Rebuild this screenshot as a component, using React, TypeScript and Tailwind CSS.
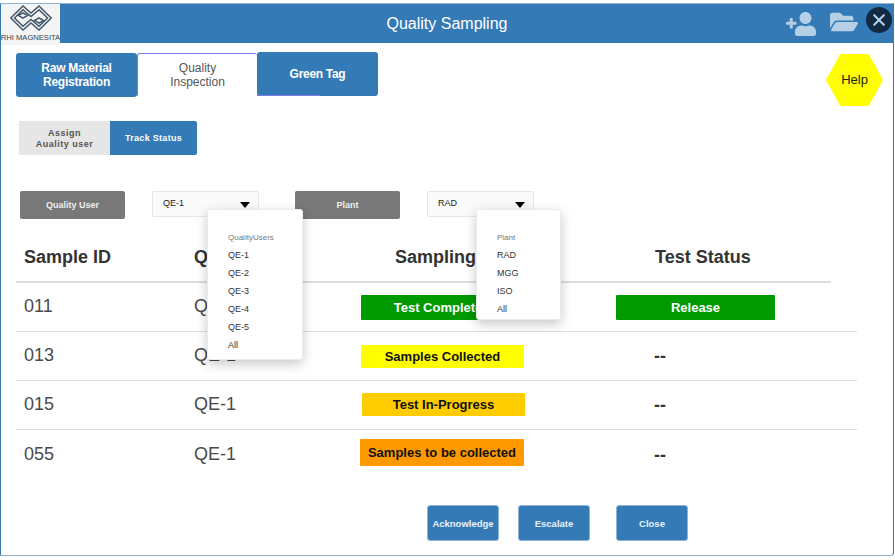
import { FaFolderOpen, FaUserPlus } from "react-icons/fa";
import { IoClose } from "react-icons/io5";

const qualityUsers = ["QE-1", "QE-2", "QE-3", "QE-4", "QE-5", "All"];
const plants = ["RAD", "MGG", "ISO", "All"];

type Row = {
  id: string;
  user: string;
  status: string;
  badge: string;
  release: boolean;
};

const rows: Row[] = [
  { id: "011", user: "QE-1", status: "Test Completed", badge: "h-[25px] mt-[12px] w-[162px] bg-[#009900] text-white", release: true },
  { id: "013", user: "QE-1", status: "Samples Collected", badge: "h-[23px] mt-[13px] w-[163px] bg-[#ffff00] text-[#111]", release: false },
  { id: "015", user: "QE-1", status: "Test In-Progress", badge: "h-[23px] mt-[12px] ml-px w-[163px] bg-[#ffcc00] text-[#111]", release: false },
  { id: "055", user: "QE-1", status: "Samples to be collected", badge: "h-[27px] mt-[9px] -ml-px w-[164px] bg-[#ff9900] text-[#111]", release: false },
];

function Logo() {
  return (
    <div className="flex h-[41px] w-[59px] shrink-0 flex-col items-center bg-[#f4f4f4]">
      <svg width="42" height="26" viewBox="0 0 42 26" className="mt-px" fill="none" stroke="#43566a" strokeWidth="1.5">
        <path d="M0.8 13 L13 1 L21 8 L29 1 L41.2 13 L29 25 L21 18 L13 25 Z" />
        <path d="M4.5 13 L13 4.8 L21 11.5 L29 4.8 L37.5 13 L29 21.2 L21 14.5 L13 21.2 Z" />
        <path d="M8.5 10.5 L13 7.8 L17.5 10.5 L13 13.2 Z M24.5 15.5 L29 12.8 L33.5 15.5 L29 18.2 Z" />
      </svg>
      <span className="mt-[2px] whitespace-nowrap text-[7.6px] leading-[10px] font-medium text-[#33424f]">RHI MAGNESITA</span>
    </div>
  );
}

function FilterSelect({ value, options, title, menuClass }: { value: string; options: string[]; title: string; menuClass: string }) {
  return (
    <div className="relative h-[26px] w-[107px]">
      <div className="flex h-full items-center justify-between rounded-[2px] border border-[#e6e6e6] bg-[#fafafa] pr-[8px] pl-[10px] text-[9px] text-[#222]">
        <span>{value}</span>
        <span className="mt-px h-0 w-0 border-x-[5px] border-t-[6px] border-x-transparent border-t-black" />
      </div>
      <div className={`absolute z-10 flex flex-col rounded-[3px] border border-[#ececec] bg-white pt-[19px] pl-[20px] text-[9px] text-[#333] shadow-[0_4px_12px_rgba(0,0,0,0.22)] ${menuClass}`}>
        <div className="h-[17px] text-[8px] leading-[18px] text-[#777]">{title}</div>
        {options.map((opt) => (
          <div key={opt} className="h-[18px] leading-[18px]">
            {opt}
          </div>
        ))}
      </div>
    </div>
  );
}

export default function App() {
  return (
    <div className="h-[560px] w-[895px] overflow-hidden bg-white pt-[3px] font-['Liberation_Sans',Arial,sans-serif]">
      <div className="h-[553px] w-[894px] rounded-br-[4px] border border-t-[#8fb4d6] border-r-[#337ab7] border-b-[#8fb4d6] border-l-[#337ab7]">
        {/* header */}
        <div className="relative flex h-[39px] items-start bg-[#337ab7]">
          <Logo />
          <div className="flex-1 pt-[10px] pl-[48px] text-center text-[16px] leading-[20px] text-white">Quality Sampling</div>
          <div className="flex items-start pt-[3px] pr-[1px]">
            <FaUserPlus className="mt-[2px] mr-[14px] -scale-x-100 text-[#b5cfe6]" size={30} />
            <FaFolderOpen className="mt-[1px] mr-[8px] text-[#b5cfe6]" size={28} />
            <div className="flex h-[26px] w-[26px] items-center justify-center rounded-full bg-[#132a43]">
              <IoClose className="text-[#b5cfe6]" size={22} />
            </div>
          </div>
        </div>

        {/* tabs + help */}
        <div className="flex items-start justify-between pt-[9px] pr-[10px] pl-[15px]">
          <div className="flex items-start text-[12px] leading-[14px]">
            <button type="button" className="mt-px h-[44px] w-[121px] rounded-[3px] bg-[#337ab7] font-bold tracking-[-0.25px] text-white">
              Raw Material
              <br />
              Registration
            </button>
            <button type="button" className="mt-px h-[43px] w-[120px] rounded-t-[3px] border-t border-l border-t-[#7b7bef] border-l-[#7b7bef] bg-white text-[#555]">
              Quality
              <br />
              Inspection
            </button>
            <div className="relative">
              <button type="button" className="h-[44px] w-[121px] rounded-[3px] bg-[#337ab7] font-bold tracking-[-0.3px] text-white">
                Green Tag
              </button>
              <div className="absolute bottom-0 left-0 h-px w-[63px] bg-[#7b7bef]" />
            </div>
          </div>
          <div className="mt-[2px] flex h-[52px] w-[57px] items-center justify-center bg-[#ffff00] text-[13px] text-[#222] [clip-path:polygon(25%_0,75%_0,100%_50%,75%_100%,25%_100%,0_50%)]">
            Help
          </div>
        </div>

        {/* sub tabs */}
        <div className="mt-[15px] ml-[18px] flex h-[34px] w-[178px] text-[9px] leading-[11px] font-bold tracking-[0.3px]">
          <div className="flex w-[91px] items-center justify-center bg-[#e6e6e6] pt-[2px] text-center tracking-[0.5px] text-[#555]">
            Assign
            <br />
            Auality user
          </div>
          <div className="flex w-[87px] items-center justify-center rounded-r-[2px] bg-[#337ab7] text-white">Track Status</div>
        </div>

        {/* filters */}
        <div className="mt-[36px] ml-[19px] flex items-start">
          <div className="flex h-[28px] w-[105px] items-center justify-center rounded-[2px] bg-[#787878] pt-[2px] text-[9px] font-bold text-[#eee]">Quality User</div>
          <div className="ml-[27px]">
            <FilterSelect value="QE-1" options={qualityUsers} title="QualityUsers" menuClass="top-[18px] left-[55px] h-[151px] w-[96px]" />
          </div>
          <div className="ml-[36px] flex h-[28px] w-[105px] items-center justify-center rounded-[2px] bg-[#787878] pt-[2px] text-[9px] font-bold text-[#eee]">Plant</div>
          <div className="ml-[27px]">
            <FilterSelect value="RAD" options={plants} title="Plant" menuClass="top-[18px] left-[49px] h-[111px] w-[85px]" />
          </div>
        </div>

        {/* table */}
        <div className="mt-[19px] ml-[15px] w-[841px]">
          <div className="grid h-[45px] w-[815px] grid-cols-[178px_167px_255px_1fr] items-center border-b-2 border-[#dddddd] pb-[4px] text-[18px] font-bold text-[#333]">
            <div className="pl-[8px]">Sample ID</div>
            <div>Quality User</div>
            <div className="pl-[34px] whitespace-nowrap">Sampling Status</div>
            <div className="pl-[39px]">Test Status</div>
          </div>
          {rows.map((row, i) => (
            <div
              key={row.id}
              className={`grid h-[49px] grid-cols-[178px_167px_255px_1fr] text-[18px] text-[#4a4a4a] ${i < rows.length - 1 ? "border-b border-[#dddddd]" : "pt-px"}`}
            >
              <div className="pt-[12px] pl-[8px] leading-[22px]">{row.id}</div>
              <div className="pt-[12px] leading-[22px]">{row.user}</div>
              <div className={i === rows.length - 1 ? "-mt-px" : ""}>
                <div className={`flex items-center justify-center rounded-[1px] text-[13px] font-bold ${row.badge}`}>{row.status}</div>
              </div>
              <div>
                {row.release ? (
                  <div className="mt-[12px] flex h-[25px] w-[159px] items-center justify-center rounded-[1px] bg-[#009900] text-[13px] font-bold text-white">Release</div>
                ) : (
                  <div className="pt-[13px] pl-[38px] leading-[22px] font-bold text-[#333]">--</div>
                )}
              </div>
            </div>
          ))}
        </div>

        {/* actions */}
        <div className="mt-[26px] ml-[426px] flex text-[9.5px] font-bold text-[#eaf1f8]">
          <button type="button" className="h-[36px] w-[72px] rounded-[3px] border border-[#8fb4d6] bg-[#337ab7] pt-[2px]">Acknowledge</button>
          <button type="button" className="ml-[19px] h-[36px] w-[72px] rounded-[3px] border border-[#8fb4d6] bg-[#337ab7] pt-[2px]">Escalate</button>
          <button type="button" className="ml-[26px] h-[36px] w-[72px] rounded-[3px] border border-[#8fb4d6] bg-[#337ab7] pt-[2px]">Close</button>
        </div>
      </div>
    </div>
  );
}
